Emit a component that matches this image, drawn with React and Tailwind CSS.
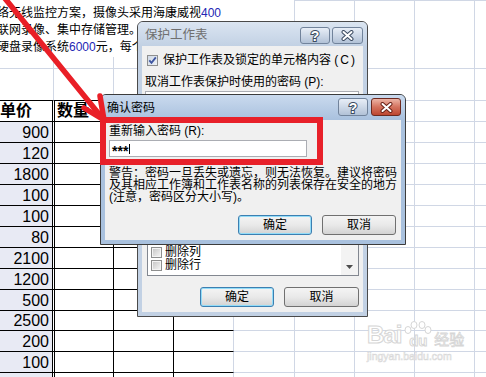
import React from "react";

const prices = ["900", "120", "1800", "100", "100", "80", "2100", "1200", "500", "2500", "200", "100", "300"];
const rowHeights = [
  "h-[21px]", "h-[21px]", "h-[21px]", "h-[21px]", "h-[21px]", "h-[21px]", "h-[21px]",
  "h-[21px]", "h-[21px]", "h-[20px]", "h-[21px]", "h-[21px]", "h-[21px]",
];

const listItems = [
  "选定锁定单元格",
  "选定未锁定的单元格",
  "设置单元格格式",
  "设置列格式",
  "设置行格式",
  "插入列",
  "插入行",
  "插入超链接",
  "删除列",
  "删除行",
];

function LightCells() {
  return (
    <>
      <div className="w-[61px] shrink-0 border-r border-b border-[#d0d7e5]" />
      <div className="w-[60px] shrink-0 border-r border-b border-[#d0d7e5]" />
      <div className="w-[60px] shrink-0 border-r border-b border-[#d0d7e5]" />
      <div className="w-[60px] shrink-0 border-r border-b border-[#d0d7e5]" />
      <div className="flex-1 border-b border-[#d0d7e5]" />
    </>
  );
}

function Sheet() {
  return (
    <div className="flex flex-col">
      {/* merged text cell */}
      <div className="flex h-[57px]">
        <div className="w-[295px] shrink-0 overflow-hidden whitespace-nowrap border-r border-[#d0d7e5] pt-[5px] text-[12px] leading-[17px]">
          <div className="-ml-[3px]">
            络无线监控方案，摄像头采用海康威视<span className="text-[#2326b4]">400</span>
          </div>
          <div className="-ml-[3px]">联网录像、集中存储管理。每个硬盘</div>
          <div className="-ml-[3px]">
            硬盘录像系统<span className="text-[#2326b4]">6000</span>元，每个摄像头
          </div>
        </div>
        <div className="w-[60px] shrink-0 border-t border-r border-[#d0d7e5]" />
        <div className="w-[60px] shrink-0 border-t border-r border-[#d0d7e5]" />
        <div className="w-[60px] shrink-0 border-t border-r border-[#d0d7e5]" />
        <div className="flex-1 border-t border-[#d0d7e5]" />
      </div>

      <div className="flex h-[12px]">
        <div className="w-[54px] shrink-0 border-r border-b border-[#d0d7e5]" />
        <div className="w-[60px] shrink-0 border-r border-b border-[#d0d7e5]" />
        <div className="w-[60px] shrink-0 border-r border-b border-[#d0d7e5]" />
        <div className="w-[60px] shrink-0 border-r border-b border-[#d0d7e5]" />
        <LightCells />
      </div>

      <div className="flex h-[32px]">
        <div className="w-[54px] shrink-0 border-r border-b border-r-[#d0d7e5] border-b-black" />
        <div className="w-[60px] shrink-0 border-r border-b border-r-[#d0d7e5] border-b-black" />
        <div className="w-[60px] shrink-0 border-r border-b border-r-[#d0d7e5] border-b-black" />
        <div className="w-[60px] shrink-0 border-r border-b border-r-[#d0d7e5] border-b-black" />
        <LightCells />
      </div>

      {/* header row */}
      <div className="flex h-[21px]">
        <div className="flex w-[55px] shrink-0 items-center border-r-[3px] border-b border-double border-black bg-clip-padding text-[16px] font-bold leading-[18px]">
          单价
        </div>
        <div className="flex w-[59px] shrink-0 items-center border-r border-b border-black pl-[2px] text-[16px] font-bold leading-[18px]">
          数量
        </div>
        <div className="w-[60px] shrink-0 border-r border-b border-black" />
        <div className="w-[60px] shrink-0 border-r border-b border-r-[#d0d7e5] border-b-black" />
        <LightCells />
      </div>

      {prices.map((p, i) => (
        <div key={i} className={`flex ${rowHeights[i]}`}>
          <div className="flex w-[55px] shrink-0 items-end justify-end border-r-[3px] border-b border-double border-black bg-[#e8eaf4] bg-clip-padding pr-[3px] text-[16px] leading-[18px]">
            {p}
          </div>
          <div className="w-[59px] shrink-0 border-r border-b border-black" />
          <div className="w-[60px] shrink-0 border-r border-b border-black" />
          <div className="w-[60px] shrink-0 border-r border-b border-r-[#d0d7e5] border-b-black" />
          <LightCells />
        </div>
      ))}
    </div>
  );
}

function TitleButton({ kind, red, wide }) {
  const look = red
    ? "border-[#6d2a20] bg-linear-to-b from-[#ecb4a6] via-[#d4725e] to-[#bd4631]"
    : "border-[#71839b] bg-linear-to-b from-[#e8eef7] via-[#cdd8e7] to-[#b2c2d7]";
  return (
    <div
      className={`flex h-full items-center justify-center rounded-[3px] border ${look} ${
        wide ? "w-[31px]" : "w-[30px]"
      }`}
    >
      {kind === "help" ? (
        <svg width="12" height="15" viewBox="0 0 12 15">
          <text
            x="6"
            y="12.5"
            textAnchor="middle"
            fontSize="14"
            fontWeight="700"
            fontFamily="Liberation Sans, sans-serif"
            fill="#fff"
            stroke="#3d4c62"
            strokeWidth="2"
            paintOrder="stroke"
          >
            ?
          </text>
        </svg>
      ) : (
        <svg width="15" height="11" viewBox="0 0 15 11">
          <path d="M3.5 2L11.5 9M11.5 2L3.5 9" stroke={red ? "#6a2218" : "#3d4c62"} strokeWidth="4" strokeLinecap="round" />
          <path d="M3.5 2L11.5 9M11.5 2L3.5 9" stroke="#fff" strokeWidth="2" strokeLinecap="round" />
        </svg>
      )}
    </div>
  );
}

function Check({ checked }) {
  return (
    <div className="flex h-[11px] w-[11px] shrink-0 items-center justify-center border border-[#8e8f8f] bg-[#f4f4f4]">
      {checked ? (
        <div className="flex h-[9px] w-[9px] items-center justify-center bg-linear-to-br from-[#cfd8e6] to-[#eef2f7]">
          <svg width="9" height="9" viewBox="0 0 9 9">
            <path d="M1.3 4.3L3.5 6.8L7.8 1.4" stroke="#3e55a0" strokeWidth="1.8" fill="none" />
          </svg>
        </div>
      ) : (
        <div className="h-[7px] w-[7px] bg-linear-to-br from-[#c9c9c9] to-[#f2f2f2]" />
      )}
    </div>
  );
}

function Btn({ label, isDefault, ml, w }) {
  return (
    <div
      className={`flex h-[20px] items-center justify-center rounded-[3px] border bg-linear-to-b from-[#f4f4f4] via-[#e9e9e9] to-[#d3d3d3] text-[12px] leading-none ${ml} ${w} ${
        isDefault ? "border-[#3c7fb1] shadow-[inset_0_0_0_1px_#92dcf8]" : "border-[#707070]"
      }`}
    >
      {label}
    </div>
  );
}

function ProtectDialog() {
  return (
    <div className="absolute left-[137px] top-[21px] flex h-[296px] w-[231px] flex-col rounded-t-[6px] border border-[#4a4a4a] bg-[#c2d1e4]">
      <div className="flex h-[24px] shrink-0 items-start justify-between rounded-t-[5px] bg-linear-to-b from-[#dbe5f1] to-[#c2d1e4] pl-[7px] pr-[4px]">
        <span className="pt-[6px] text-[12.5px] leading-[15px] text-[#6f6f6f]">保护工作表</span>
        <div className="mt-[5px] flex h-[17px] gap-[2px]">
          <TitleButton kind="help" />
          <TitleButton kind="close" wide />
        </div>
      </div>
      <div className="mx-[4px] mb-[4px] flex flex-1 flex-col bg-[#f0f0f0] text-[12px]">
        <div className="mt-[8px] flex h-[13px] items-center pl-[5px]">
          <Check checked />
          <span className="ml-[5px] whitespace-nowrap leading-[13px]">
            保护工作表及锁定的单元格内容 <span className="tracking-[2px]">(C)</span>
          </span>
        </div>
        <div className="mt-[8px] whitespace-nowrap pl-[3px] leading-[15px]">取消工作表保护时使用的密码 (P):</div>
        <div className="ml-[3px] mt-[1px] h-[21px] w-[214px] border border-[#abadb3] bg-white" />
        <div className="mt-[8px] whitespace-nowrap pl-[3px] leading-[15px]">允许此工作表的所有用户进行 (O):</div>
        <div className="ml-[5px] mt-[3px] flex h-[138px] w-[212px] border border-[#828790] bg-white">
          <div className="flex flex-1 flex-col justify-end overflow-hidden pb-[3px] pl-[3px]">
            {listItems.map((t) => (
              <div key={t} className="flex h-[13px] items-center">
                <Check />
                <span className="ml-[3px] whitespace-nowrap leading-[13px]">{t}</span>
              </div>
            ))}
          </div>
          <div className="flex w-[17px] flex-col justify-end bg-[#f3f3f3]">
            <div className="flex h-[16px] items-center justify-center">
              <svg width="7" height="4" viewBox="0 0 7 4">
                <path d="M0 0H7L3.5 4Z" fill="#4d4d4d" />
              </svg>
            </div>
          </div>
        </div>
        <div className="mt-[11px] flex">
          <Btn label="确定" isDefault ml="ml-[58px]" w="w-[74px]" />
          <Btn label="取消" ml="ml-[10px]" w="w-[75px]" />
        </div>
      </div>
    </div>
  );
}

function ConfirmDialog() {
  return (
    <div className="absolute left-[100px] top-[94px] flex h-[151px] w-[306px] flex-col rounded-t-[6px] border border-[#3c3c3c] bg-[#a9c1de]">
      <div className="flex h-[25px] shrink-0 items-start justify-between rounded-t-[5px] bg-linear-to-b from-[#cadaee] to-[#a9c1de] pl-[6px] pr-[4px]">
        <span className="pt-[6px] text-[12px] leading-[14px]">确认密码</span>
        <div className="mt-[3px] flex h-[18px] gap-[3px]">
          <TitleButton kind="help" />
          <TitleButton kind="close" red />
        </div>
      </div>
      <div className="mx-[4px] mb-[4px] flex flex-1 flex-col bg-[#f0f0f0] pl-[4px] text-[12px]">
        <div className="mt-[4px] whitespace-nowrap leading-[14px]">重新输入密码 (R):</div>
        <div className="mt-[2px] flex h-[17px] w-[198px] items-center border border-[#abadb3] bg-white pl-[2px]">
          <span className="pt-[5px] text-[14px] font-bold leading-none">***</span>
          <span className="ml-[1px] h-[10px] w-px bg-black" />
        </div>
        <div className="mt-[10px] whitespace-nowrap leading-[12px]">
          <div>警告：密码一旦丢失或遗忘，则无法恢复。建议将密码</div>
          <div>及其相应工作簿和工作表名称的列表保存在安全的地方</div>
          <div>(注意，密码区分大小写)。</div>
        </div>
        <div className="mt-[12px] flex">
          <Btn label="确定" isDefault ml="ml-[129px]" w="w-[74px]" />
          <Btn label="取消" ml="ml-[10px]" w="w-[74px]" />
        </div>
      </div>
    </div>
  );
}

function Arrow() {
  return (
    <svg className="pointer-events-none absolute left-0 top-0" width="486" height="377" viewBox="0 0 486 377">
      <g stroke="#e91f27" strokeWidth="5.5" strokeLinecap="round" strokeLinejoin="round" fill="none">
        <path d="M3 -4L103 119" />
        <path d="M84 108L104 120L100 96" />
      </g>
    </svg>
  );
}

function Watermark() {
  return (
    <div className="pointer-events-none absolute left-[367px] top-[321px] flex flex-col text-white">
      <div className="flex items-end">
        <span className="text-[24px] font-bold leading-[24px] tracking-[-1px] [-webkit-text-stroke:1px_#d6d6d6]">Bai</span>
        <div className="relative ml-[2px] flex flex-col items-center">
          <svg width="30" height="14" viewBox="0 0 30 14">
            <g fill="#fff" stroke="#d6d6d6" strokeWidth="1">
              <ellipse cx="5" cy="9" rx="3" ry="3.5" />
              <ellipse cx="11" cy="4" rx="3" ry="3.5" />
              <ellipse cx="19" cy="4" rx="3" ry="3.5" />
              <ellipse cx="25" cy="9" rx="3" ry="3.5" />
            </g>
          </svg>
          <span className="text-[15px] font-bold leading-[12px] [-webkit-text-stroke:1px_#d6d6d6]">du</span>
        </div>
        <span className="ml-[1px] text-[15px] leading-[15px] [-webkit-text-stroke:0.8px_#d6d6d6]">经验</span>
      </div>
      <span className="mt-[3px] text-[10.5px] leading-[12px] [-webkit-text-stroke:0.6px_#d8d8d8]">jingyan.baidu.com</span>
    </div>
  );
}

export default function App() {
  return (
    <div className="relative h-[377px] w-[486px] overflow-hidden bg-white font-['Liberation_Sans','Noto_Sans_CJK_SC',sans-serif] text-black">
      <Sheet />
      <ProtectDialog />
      <ConfirmDialog />
      <div className="absolute left-[100px] top-[117px] h-[48px] w-[223px] border-[6px] border-[#e8212a]" />
      <Arrow />
      <Watermark />
    </div>
  );
}
